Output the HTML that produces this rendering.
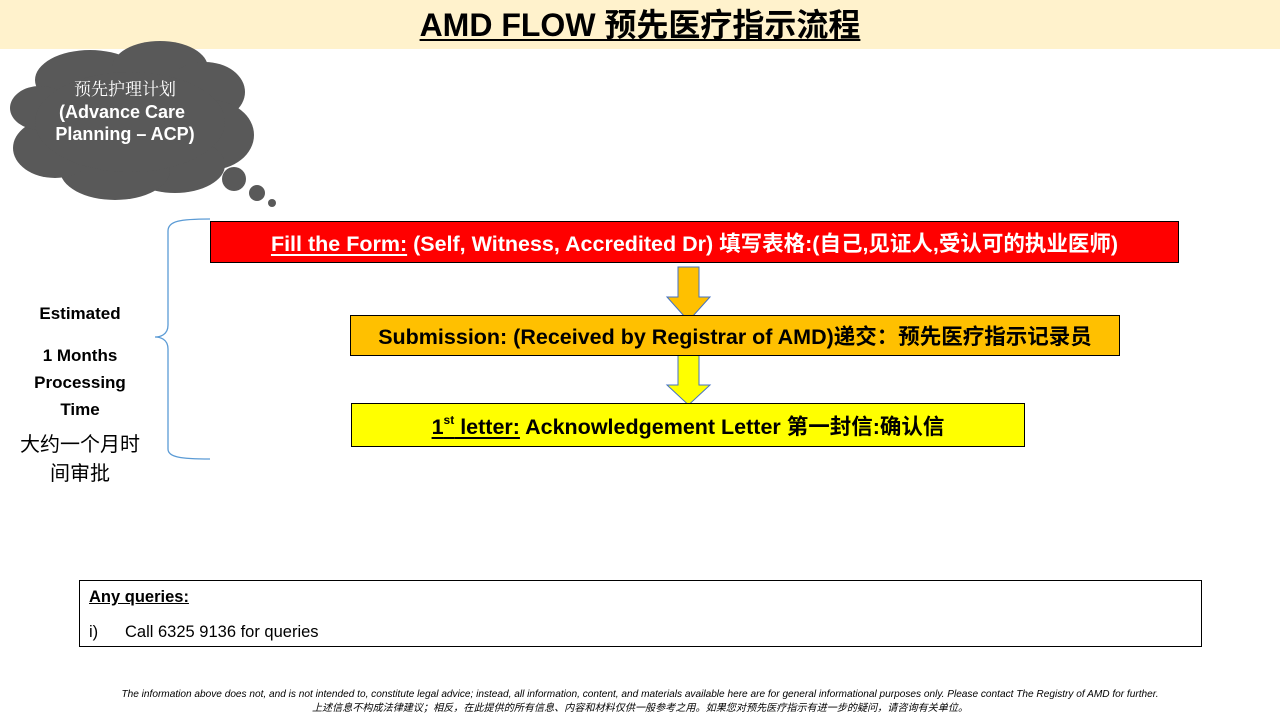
<!DOCTYPE html>
<html><head><meta charset="utf-8"><style>
*{margin:0;padding:0;box-sizing:border-box}
body{width:1280px;height:720px;background:#fff;position:relative;overflow:hidden;font-family:"Liberation Sans","Noto Sans CJK SC",sans-serif}
.abs{position:absolute}
.title{left:0;top:0;width:1280px;height:49px;background:#fff2cc;text-align:center;font-weight:bold;font-size:32px;line-height:50px;color:#000}
.title span{text-decoration:underline;text-decoration-thickness:2px;text-underline-offset:3px}
.box{border:1px solid #000;font-weight:bold;display:flex;align-items:center;justify-content:center;white-space:nowrap;font-size:21.5px;letter-spacing:0}
.u{text-decoration:underline;text-underline-offset:3px}
.side{width:160px;text-align:center;font-weight:bold;font-size:17px;color:#000}
sup{font-size:12px;line-height:0;position:relative;top:-1px}
</style></head><body>
<div class="abs title"><span>AMD FLOW 预先医疗指示流程</span></div>

<svg class="abs" style="left:0;top:30px" width="300" height="190">
<g fill="#595959">
<ellipse cx="90" cy="50" rx="55" ry="30"/>
<ellipse cx="160" cy="38" rx="48" ry="27"/>
<ellipse cx="205" cy="62" rx="40" ry="30"/>
<ellipse cx="210" cy="105" rx="44" ry="35"/>
<ellipse cx="175" cy="135" rx="50" ry="28"/>
<ellipse cx="115" cy="140" rx="55" ry="30"/>
<ellipse cx="55" cy="118" rx="42" ry="30"/>
<ellipse cx="40" cy="78" rx="30" ry="22"/>
<ellipse cx="130" cy="92" rx="95" ry="50"/>
<circle cx="234" cy="149" r="12"/>
<circle cx="257" cy="163" r="8"/>
<circle cx="272" cy="173" r="4"/>
</g>
<text x="125" y="65" fill="#fff" font-size="17" text-anchor="middle" font-family="Noto Serif CJK SC,serif">预先护理计划</text>
<text x="122" y="88" fill="#fff" font-size="18" font-weight="bold" text-anchor="middle" font-family="Liberation Sans,sans-serif">(Advance Care</text>
<text x="125" y="110" fill="#fff" font-size="18" font-weight="bold" text-anchor="middle" font-family="Liberation Sans,sans-serif">Planning – ACP)</text>
</svg>

<svg class="abs" style="left:150px;top:215px" width="65" height="250">
<path d="M60 4 C30 4 18 6 18 16 L18 110 C18 120 10 122 5 122 C10 122 18 124 18 134 L18 234 C18 242 30 244 60 244" fill="none" stroke="#5b9bd5" stroke-width="1.3"/>
</svg>

<div class="abs side" style="left:0;top:304px">Estimated</div>
<div class="abs side" style="left:0;top:342px;line-height:27px">1 Months<br>Processing<br>Time</div>
<div class="abs side" style="left:0;top:431px;font-weight:normal;font-size:20px;line-height:29px">大约一个月时<br>间审批</div>

<div class="abs box" style="left:210px;top:221px;width:969px;height:42px;background:#ff0000;color:#fff"><div><span class="u">Fill the Form:</span> (Self, Witness, Accredited Dr) 填写表格:(自己,见证人,受认可的执业医师)</div></div>

<svg class="abs" style="left:658px;top:264px" width="60" height="145">
<path d="M28 3 L49 3 L49 33 L60 33 L38.5 57 L17 33 L28 33 Z" transform="translate(-8,0)" fill="#ffc000" stroke="#4472c4" stroke-width="1"/>
<path d="M28 87 L49 87 L49 121 L60 121 L38.5 141 L17 121 L28 121 Z" transform="translate(-8,0)" fill="#ffff00" stroke="#4472c4" stroke-width="1"/>
</svg>

<div class="abs box" style="left:350px;top:315px;width:770px;height:41px;background:#ffc000;color:#000"><div>Submission: (Received by Registrar of AMD)递交：预先医疗指示记录员</div></div>
<div class="abs box" style="left:351px;top:403px;width:674px;height:44px;background:#ffff00;color:#000"><div><span class="u">1<sup>st</sup> letter:</span> Acknowledgement Letter 第一封信:确认信</div></div>

<div class="abs" style="left:79px;top:580px;width:1123px;height:67px;border:1px solid #000;font-size:16.5px;color:#000">
<div style="position:absolute;left:9px;top:7px;font-weight:bold;text-decoration:underline">Any queries:</div>
<div style="position:absolute;left:9px;top:42px">i)</div>
<div style="position:absolute;left:45px;top:42px">Call 6325 9136 for queries</div>
</div>

<div class="abs" style="left:0;top:688px;width:1280px;text-align:center;font-size:10.1px;font-style:italic;color:#000;line-height:14px;white-space:nowrap">The information above does not, and is not intended to, constitute legal advice; instead, all information, content, and materials available here are for general informational purposes only. Please contact The Registry of AMD for further.<br>上述信息不构成法律建议；相反，在此提供的所有信息、内容和材料仅供一般参考之用。如果您对预先医疗指示有进一步的疑问，请咨询有关单位。</div>
</body></html>
